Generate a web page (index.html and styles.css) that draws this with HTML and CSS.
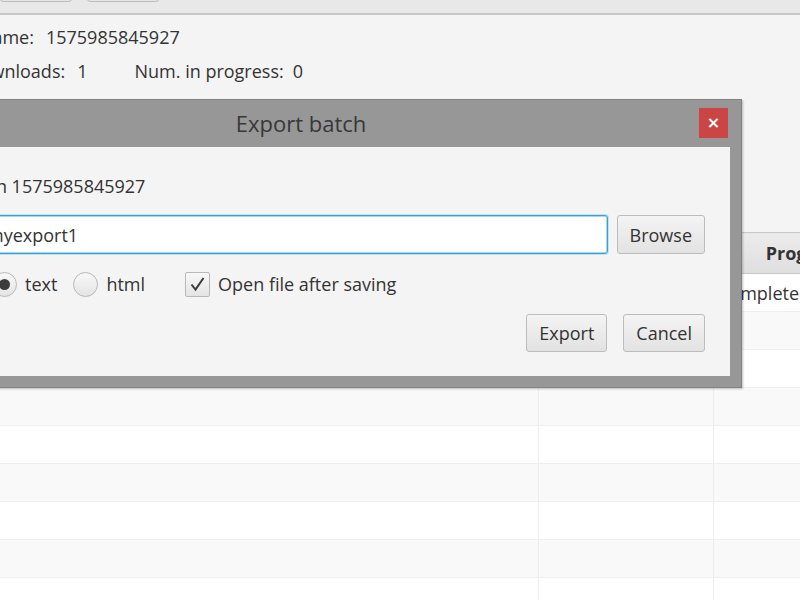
FILE: index.html
```html
<!DOCTYPE html>
<html lang="en">
<head>
    <meta charset="UTF-8">
    <meta name="viewport" content="width=device-width, initial-scale=1.0">
    <title>Batch Downloads</title>
    <link rel="stylesheet" href="styles.css">
</head>
<body>
    <div class="toolbar">
        <button class="tool-btn">New</button>
        <button class="tool-btn">Open</button>
    </div>

    <div class="info">
        <div class="info-row row-name">
            <span class="info-label">Batch name:</span>
            <span class="info-value">1575985845927</span>
        </div>
        <div class="info-row row-counts">
            <span class="info-label">Num. downloads:</span>
            <span class="info-value">1</span>
            <span class="info-label second">Num. in progress:</span>
            <span class="info-value">0</span>
        </div>
    </div>

    <table class="downloads">
        <colgroup>
            <col class="col-url">
            <col class="col-status">
            <col class="col-progress">
        </colgroup>
        <thead>
            <tr>
                <th>URL</th>
                <th>Size</th>
                <th>Progress</th>
            </tr>
        </thead>
        <tbody>
            <tr><td>https://example.org/files/report.pdf</td><td>1.2 MB</td><td>Completed</td></tr>
            <tr><td></td><td></td><td></td></tr>
            <tr><td></td><td></td><td></td></tr>
            <tr><td></td><td></td><td></td></tr>
            <tr><td></td><td></td><td></td></tr>
            <tr><td></td><td></td><td></td></tr>
            <tr><td></td><td></td><td></td></tr>
            <tr><td></td><td></td><td></td></tr>
            <tr><td></td><td></td><td></td></tr>
        </tbody>
    </table>

    <!-- modal window over the main view -->
    <div class="dialog">
        <div class="dialog-title">
            Export batch
            <button class="close-btn">&#215;</button>
        </div>
        <div class="dialog-body">
            <div class="dialog-label">Export batch run 1575985845927</div>

            <div class="file-row">
                <input type="text" class="file-input" value="myexport1">
                <button class="btn">Browse</button>
            </div>

            <div class="options">
                <label class="option first">
                    <input type="radio" name="format" checked>
                    text
                </label>
                <label class="option">
                    <input type="radio" name="format">
                    html
                </label>
                <label class="option check">
                    <span class="checkbox">
                        <svg width="25" height="25" viewBox="0 0 25 25">
                            <path d="M6.5 12.5 L10.5 17.5 L18.5 6" fill="none" stroke="#3a3a3a" stroke-width="2"/>
                        </svg>
                    </span>
                    Open file after saving
                </label>
            </div>

            <div class="actions">
                <button class="btn export">Export</button>
                <button class="btn cancel">Cancel</button>
            </div>
        </div>
    </div>
</body>
</html>
```

FILE: styles.css
```css
body {
    margin: 0;
    width: 800px;
    height: 600px;
    overflow: hidden;
    position: relative;
    background: #f4f4f4;
    font-family: "Open Sans", "Noto Sans", sans-serif;
    font-size: 18px;
    color: #333;
}

.toolbar {
    height: 13px;
    background: #e8e8e8;
    border-bottom: 2px solid #c8c8c8;
    overflow: hidden;
}

.tool-btn {
    width: 72px;
    height: 30px;
    margin-top: -28px;
    margin-right: 10px;
    border: 1px solid #bdbdbd;
    border-radius: 3px;
    background: #e4e4e4;
    font-size: 11px;
    vertical-align: top;
}

.info {
    padding-top: 5px;
}

.info-row {
    display: flex;
    height: 34px;
    line-height: 34px;
    white-space: nowrap;
}

.row-name {
    margin-left: -71px;
}

.row-counts {
    margin-left: -82px;
}

.info-label {
    margin-right: 12px;
}

.info-label.second {
    margin-left: 47px;
    margin-right: 9px;
}

.downloads {
    position: absolute;
    top: 232px;
    left: -200px;
    width: 1095px;
    table-layout: fixed;
    border-collapse: collapse;
}

.col-url {
    width: 738px;
}

.col-status {
    width: 175px;
}

.col-progress {
    width: 182px;
}

.downloads th {
    height: 38px;
    background: linear-gradient(#ececec, #dedede);
    border: 1px solid #c8c8c8;
    font-weight: bold;
    text-align: center;
}

.downloads td {
    height: 37px;
    padding: 0 4px;
    border-right: 1px solid #ededed;
    border-bottom: 1px solid #efefef;
    white-space: nowrap;
    overflow: hidden;
}

.downloads tbody tr:nth-child(odd) {
    background: #ffffff;
}

.downloads tbody tr:nth-child(even) {
    background: #f9f9f9;
}

.dialog {
    position: absolute;
    top: 99px;
    left: -140px;
    width: 880px;
    height: 287px;
    background: #979797;
    border: 1px solid #828282;
    box-shadow: 1px 1px 2px rgba(0, 0, 0, 0.25);
    display: flex;
    flex-direction: column;
}

.dialog-title {
    position: relative;
    height: 47px;
    line-height: 47px;
    text-align: center;
    font-size: 22px;
    color: #383838;
}

.close-btn {
    position: absolute;
    top: 8px;
    right: 13px;
    width: 29px;
    height: 30px;
    border: none;
    padding: 0;
    background: #cc4545;
    color: white;
    font-family: "DejaVu Sans", sans-serif;
    font-size: 16px;
    font-weight: bold;
    line-height: 30px;
}

.dialog-body {
    flex: 1;
    margin: 0 11px 11px 11px;
    padding: 26px 25px 0 108px;
    background: #f4f4f4;
}

.dialog-label {
    height: 26px;
    line-height: 26px;
    margin-left: -114px;
    white-space: nowrap;
}

.file-row {
    display: flex;
    gap: 9px;
    margin-top: 16px;
}

.file-input {
    flex: 1;
    height: 39px;
    box-sizing: border-box;
    padding: 0 6px;
    border: 1px solid #3a9fd5;
    border-radius: 3px;
    box-shadow: inset 0 0 0 1px #a9d6ef, 0 0 0 1px #bfe2f4;
    background: white;
    font-family: inherit;
    font-size: 18px;
    color: #333;
    outline: none;
}

.btn {
    height: 39px;
    padding: 0 12px;
    border: 1px solid #bcbcbc;
    border-radius: 3px;
    background: linear-gradient(#f4f4f4, #e2e2e2);
    font-family: inherit;
    font-size: 18px;
    color: #333;
}

.options {
    display: flex;
    align-items: center;
    height: 26px;
    margin-top: 17px;
    white-space: nowrap;
}

.option {
    display: flex;
    align-items: center;
    gap: 8px;
    margin-right: 16px;
}

.option.first {
    margin-left: 12px;
}

.option.check {
    margin-left: 24px;
}

.option input[type="radio"] {
    appearance: none;
    margin: 0;
    width: 25px;
    height: 25px;
    border: 1px solid #b8b8b8;
    border-radius: 50%;
    background: linear-gradient(#f8f8f8, #e4e4e4);
    position: relative;
}

.option input[type="radio"]:checked::after {
    content: "";
    position: absolute;
    top: 6px;
    left: 6px;
    width: 11px;
    height: 11px;
    border-radius: 50%;
    background: #3c3c3c;
}

.checkbox {
    width: 25px;
    height: 25px;
    box-sizing: border-box;
    border: 1px solid #b8b8b8;
    border-radius: 2px;
    background: linear-gradient(#f8f8f8, #e4e4e4);
}

.checkbox svg {
    display: block;
    margin: -1px;
}

.actions {
    display: flex;
    justify-content: flex-end;
    gap: 16px;
    margin-top: 17px;
}

.actions .btn {
    height: 38px;
}
```
